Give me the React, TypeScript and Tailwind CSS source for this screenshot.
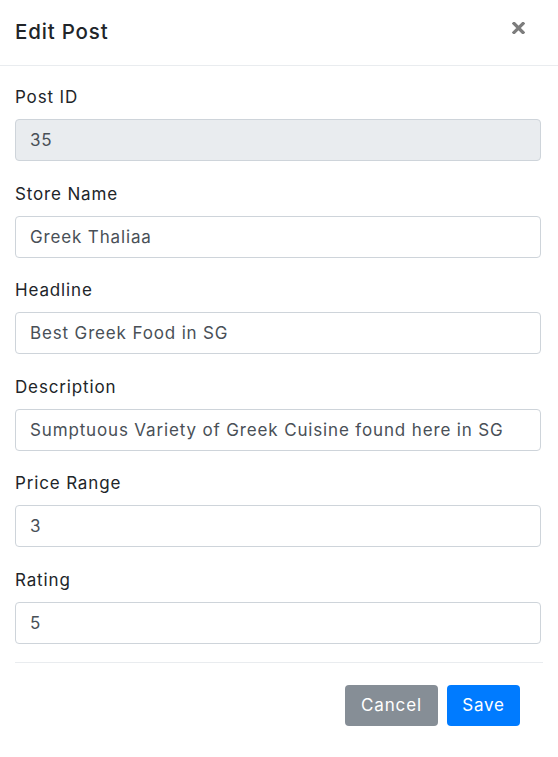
const fields = [
  { label: 'Post ID', value: '35', disabled: true },
  { label: 'Store Name', value: 'Greek Thaliaa' },
  { label: 'Headline', value: 'Best Greek Food in SG' },
  { label: 'Description', value: 'Sumptuous Variety of Greek Cuisine found here in SG' },
  { label: 'Price Range', value: '3' },
  { label: 'Rating', value: '5' },
];

export default function App() {
  return (
    <div
      className="w-[558px] h-[757px] bg-white text-[#212529]"
      style={{ fontFamily: 'Inter, "Noto Sans", sans-serif' }}
    >
      {/* Header */}
      <div className="flex items-start justify-between h-[66px] px-[15px] border-b border-[#e9ecef]">
        <h5 className="text-[20.5px] tracking-[0.04em] font-medium leading-[30px] mt-[17px]">Edit Post</h5>
        <button className="mt-[22px] mr-[18px] text-[#7d7d7d]" aria-label="Close">
          <svg width="13" height="12" viewBox="0 0 13 12">
            <path d="M2 1.5 L11 10.5 M11 1.5 L2 10.5" stroke="currentColor" strokeWidth="3.2" strokeLinecap="square" />
          </svg>
        </button>
      </div>

      {/* Body */}
      <div className="px-[15px] pt-[19px]">
        {fields.map((f) => (
          <div key={f.label} className="mb-[20.5px]">
            <label className="block text-[17px] tracking-[0.05em] leading-[24px] mb-[10px]">{f.label}</label>
            <input
              defaultValue={f.value}
              disabled={f.disabled}
              className={
                'block w-[526px] h-[42px] px-[14px] text-[17px] tracking-[0.05em] text-[#495057] border border-[#ced4da] rounded-[4px] outline-none ' +
                (f.disabled ? 'bg-[#e9ecef]' : 'bg-white')
              }
            />
          </div>
        ))}
      </div>

      {/* Footer */}
      <div className="mx-[15px] border-t border-[#e9ecef] -mt-[2px] pt-[22px] flex justify-end gap-[9px] pr-[23px]">
        <button className="h-[41px] w-[93px] rounded-[4px] bg-[#868e96] text-white text-[17px] tracking-[0.05em]">Cancel</button>
        <button className="h-[41px] w-[73px] rounded-[4px] bg-[#007bff] text-white text-[17px] tracking-[0.05em]">Save</button>
      </div>
    </div>
  );
}
